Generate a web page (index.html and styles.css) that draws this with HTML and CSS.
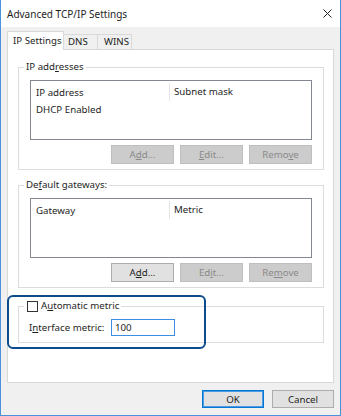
FILE: index.html
```html
<!DOCTYPE html>
<html lang="en">
<head>
    <meta charset="UTF-8">
    <title>Advanced TCP/IP Settings</title>
    <link rel="stylesheet" href="styles.css">
</head>
<body>
    <div class="window">
        <div class="titlebar">
            <span class="title">Advanced TCP/IP Settings</span>
            <svg class="close" width="9" height="9" viewBox="0 0 9 9">
                <path d="M0.5 0.5 L8.5 8.5 M8.5 0.5 L0.5 8.5" stroke="#222" stroke-width="1"/>
            </svg>
        </div>

        <div class="content">
            <div class="tabs">
                <div class="tab active">IP Settings</div>
                <div class="tab tab-dns">DNS</div>
                <div class="tab tab-wins">WINS</div>
            </div>

            <div class="panel">
                <!-- IP addresses -->
                <fieldset class="group">
                    <legend>IP add<u>r</u>esses</legend>
                    <div class="listbox">
                        <div class="list-head">
                            <span class="col col-first">IP address</span>
                            <span class="col">Subnet mask</span>
                        </div>
                        <div class="list-row">DHCP Enabled</div>
                    </div>
                    <div class="btn-row">
                        <button class="btn" disabled>A<u>d</u>d...</button>
                        <button class="btn" disabled><u>E</u>dit...</button>
                        <button class="btn" disabled>Remo<u>v</u>e</button>
                    </div>
                </fieldset>

                <!-- Default gateways -->
                <fieldset class="group group-gateways">
                    <legend>De<u>f</u>ault gateways:</legend>
                    <div class="listbox">
                        <div class="list-head">
                            <span class="col col-first">Gateway</span>
                            <span class="col">Metric</span>
                        </div>
                    </div>
                    <div class="btn-row">
                        <button class="btn">A<u>d</u>d...</button>
                        <button class="btn" disabled>Ed<u>i</u>t...</button>
                        <button class="btn" disabled>Re<u>m</u>ove</button>
                    </div>
                </fieldset>

                <!-- Metric -->
                <fieldset class="group group-metric">
                    <legend class="check-legend">
                        <span class="checkbox"></span>A<u>u</u>tomatic metric
                    </legend>
                    <div class="metric-row">
                        <label class="metric-label">I<u>n</u>terface metric:</label>
                        <div class="textbox">100</div>
                    </div>
                </fieldset>
            </div>

            <div class="footer">
                <button class="btn btn-default">OK</button>
                <button class="btn">Cancel</button>
            </div>
        </div>

        <!-- annotation frame -->
        <div class="highlight"></div>
    </div>
</body>
</html>
```

FILE: styles.css
```css
* {
    margin: 0;
    padding: 0;
    box-sizing: border-box;
}

body {
    font-family: "Noto Sans", "Segoe UI", sans-serif;
    font-size: 9.7px;
    color: #1e1e1e;
    background: #fff;
}

u {
    text-decoration-thickness: 1px;
    text-underline-offset: 1px;
}

.window {
    position: relative;
    width: 341px;
    height: 416px;
    background: #f0f0f0;
    border: 1px solid #4a93dc;
    border-top: none;
}

/* Title bar */
.titlebar {
    height: 27px;
    background: #fff;
    display: flex;
    align-items: center;
    justify-content: space-between;
    padding: 0 8px 0 6px;
}

.title {
    font-size: 10px;
}

/* Body */
.content {
    padding: 4px 6px 0 6px;
}

.tabs {
    display: flex;
    align-items: flex-end;
    height: 18px;
}

.tab {
    height: 15px;
    line-height: 14px;
    padding-left: 5px;
    background: #f0f0f0;
    border: 1px solid #d9d9d9;
    border-left: none;
    border-bottom: none;
}

.tab.active {
    width: 57px;
    height: 19px;
    line-height: 18px;
    margin-bottom: -1px;
    background: #fff;
    border-left: 1px solid #d9d9d9;
    position: relative;
    z-index: 1;
}

.tab-dns {
    width: 34px;
    padding-left: 4px;
}

.tab-wins {
    width: 34px;
    padding-left: 6px;
}

.panel {
    height: 334px;
    background: #fff;
    border: 1px solid #d9d9d9;
    padding: 11px 9px 0 10px;
}

/* Group boxes */
.group {
    border: 1px solid #dcdcdc;
    padding: 7px 11px 5px 11px;
    min-width: 0;
}

.group legend {
    margin-left: -6px;
    padding: 0 2px;
    line-height: 12px;
    height: 12px;
}

.group-gateways {
    margin-top: 9px;
}

.group-metric {
    margin-top: 12px;
    padding-bottom: 6px;
}

.listbox {
    height: 60px;
    background: #fff;
    border: 1px solid #828790;
}

.list-head {
    display: flex;
    height: 20px;
    line-height: 21px;
}

.col {
    padding-left: 4px;
}

.col-first {
    width: 139px;
    padding-left: 5px;
    border-right: 1px solid #e5e5e5;
    margin-top: 2px;
    line-height: 19px;
    height: 18px;
}

.list-row {
    height: 17px;
    line-height: 17px;
    padding-left: 5px;
}

.btn-row {
    display: flex;
    justify-content: flex-end;
    gap: 6px;
    margin-top: 5px;
}

.btn {
    width: 63px;
    height: 19px;
    font-family: inherit;
    font-size: inherit;
    color: #1e1e1e;
    background: #e1e1e1;
    border: 1px solid #adadad;
}

.btn:disabled {
    color: #8a8a8a;
    background: #cccccc;
    border-color: #bfbfbf;
}

/* Metric */
.check-legend {
    display: flex;
    align-items: center;
}

.checkbox {
    width: 11px;
    height: 11px;
    margin-left: 1px;
    margin-right: 3px;
    border: 1px solid #333;
    background: #fff;
}

.metric-row {
    display: flex;
    align-items: center;
    height: 17px;
}

.metric-label {
    width: 82px;
    margin-left: -1px;
}

.textbox {
    width: 64px;
    height: 17px;
    line-height: 15px;
    padding-left: 3px;
    border: 1px solid #3d8ee0;
    background: #fff;
}

/* Footer */
.footer {
    display: flex;
    justify-content: flex-end;
    gap: 8px;
    margin-top: 7px;
}

.footer .btn {
    width: 62px;
    height: 18px;
}

.btn-default {
    border-color: #0078d7;
    box-shadow: inset 0 0 0 1px #4f9be2;
}

/* annotation overlay */
.highlight {
    position: absolute;
    left: 6px;
    top: 295px;
    width: 199px;
    height: 54px;
    border: 2px solid #0d4c8c;
    border-radius: 6px;
}
```
